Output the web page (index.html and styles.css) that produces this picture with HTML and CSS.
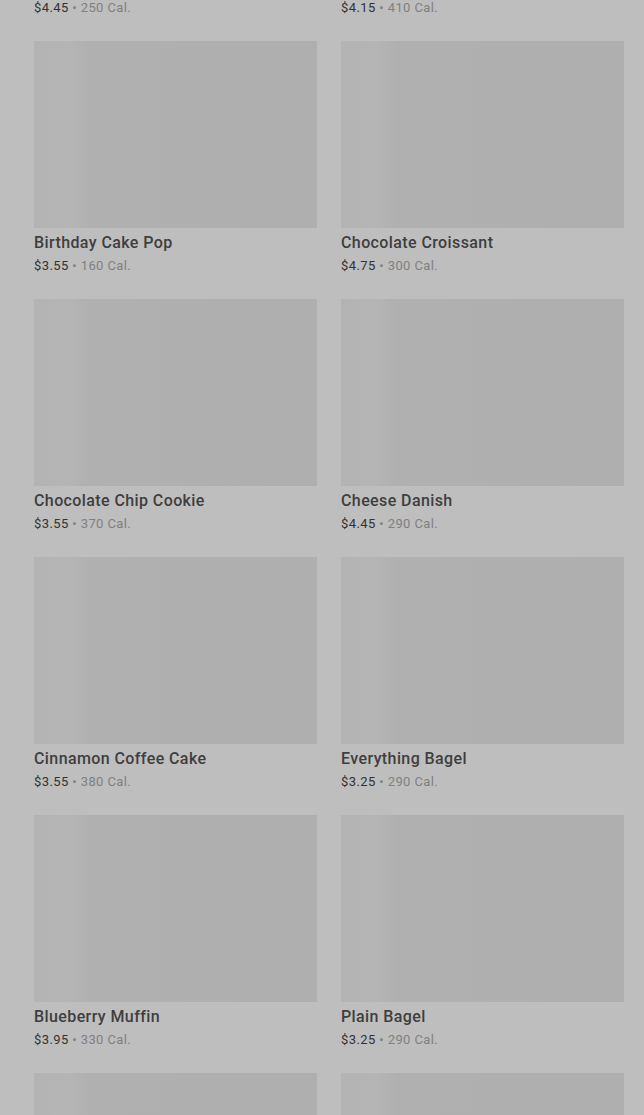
FILE: index.html
```html
<!DOCTYPE html>
<html lang="en">
<head>
  <meta charset="UTF-8" />
  <meta name="viewport" content="width=device-width, initial-scale=1.0"/>
  <title>Bakery</title>
  <link rel="stylesheet" href="styles.css">
</head>
<body>
  <div class="menu-grid">
    <div class="item">
      <div class="item-image"></div>
      <div class="item-name">Lemon Loaf</div>
      <div class="item-meta"><span class="price">$4.45</span> • 250 Cal.</div>
    </div>
    <div class="item">
      <div class="item-image"></div>
      <div class="item-name">Butter Croissant</div>
      <div class="item-meta"><span class="price">$4.15</span> • 410 Cal.</div>
    </div>

    <div class="item">
      <div class="item-image"></div>
      <div class="item-name">Birthday Cake Pop</div>
      <div class="item-meta"><span class="price">$3.55</span> • 160 Cal.</div>
    </div>
    <div class="item">
      <div class="item-image"></div>
      <div class="item-name">Chocolate Croissant</div>
      <div class="item-meta"><span class="price">$4.75</span> • 300 Cal.</div>
    </div>

    <div class="item">
      <div class="item-image"></div>
      <div class="item-name">Chocolate Chip Cookie</div>
      <div class="item-meta"><span class="price">$3.55</span> • 370 Cal.</div>
    </div>
    <div class="item">
      <div class="item-image"></div>
      <div class="item-name">Cheese Danish</div>
      <div class="item-meta"><span class="price">$4.45</span> • 290 Cal.</div>
    </div>

    <div class="item">
      <div class="item-image"></div>
      <div class="item-name">Cinnamon Coffee Cake</div>
      <div class="item-meta"><span class="price">$3.55</span> • 380 Cal.</div>
    </div>
    <div class="item">
      <div class="item-image"></div>
      <div class="item-name">Everything Bagel</div>
      <div class="item-meta"><span class="price">$3.25</span> • 290 Cal.</div>
    </div>

    <div class="item">
      <div class="item-image"></div>
      <div class="item-name">Blueberry Muffin</div>
      <div class="item-meta"><span class="price">$3.95</span> • 330 Cal.</div>
    </div>
    <div class="item">
      <div class="item-image"></div>
      <div class="item-name">Plain Bagel</div>
      <div class="item-meta"><span class="price">$3.25</span> • 290 Cal.</div>
    </div>

    <div class="item">
      <div class="item-image"></div>
    </div>
    <div class="item">
      <div class="item-image"></div>
    </div>
  </div>
</body>
</html>
```

FILE: styles.css
```css
* {
  margin: 0;
  padding: 0;
  box-sizing: border-box;
}

body {
  font-family: Roboto, "Noto Sans", Arial, sans-serif;
  background: #bebebe;
  color: #383838;
  overflow: hidden;
  height: 1115px;
}

.menu-grid {
  display: grid;
  grid-template-columns: 283px 283px;
  column-gap: 24px;
  row-gap: 23px;
  padding: 0 20px 0 34px;
  margin-top: -217px;
}

.item-image {
  height: 187px;
  background: linear-gradient(90deg, #b3b3b3 0%, #b5b5b5 12%, #b0b0b0 20%, #afafaf 100%);
}

.item-name {
  margin-top: 3px;
  font-size: 16px;
  line-height: 24px;
  font-weight: 500;
  color: #3e3e3e;
  letter-spacing: 0.4px;
}

.item-meta {
  margin-top: 1px;
  font-size: 13px;
  line-height: 20px;
  color: #808080;
  letter-spacing: 0.4px;
}

.price {
  color: #333;
}
```
